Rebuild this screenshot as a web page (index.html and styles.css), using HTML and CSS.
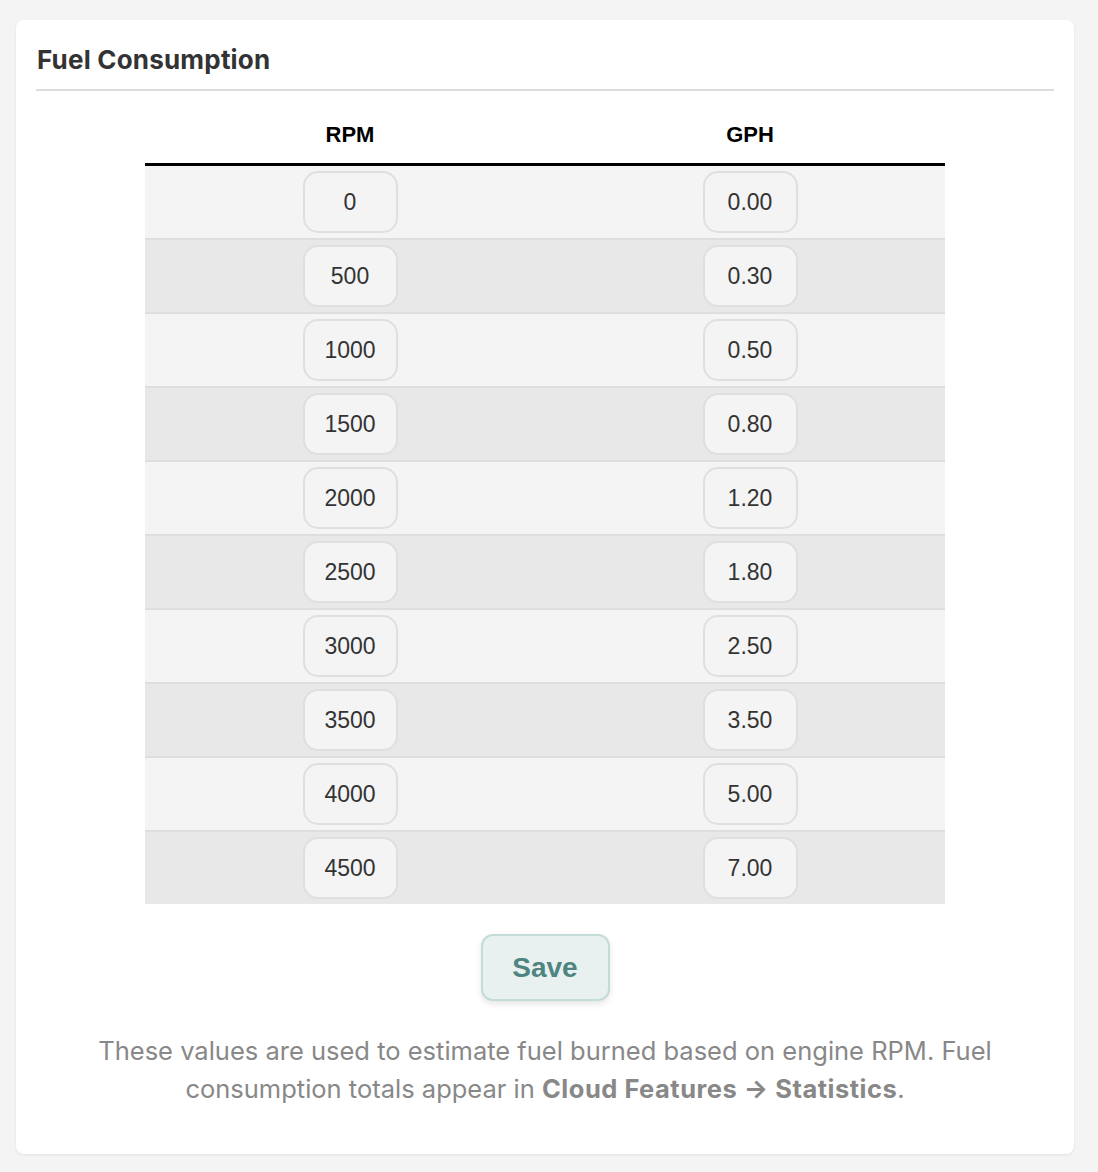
FILE: index.html
```html
<!DOCTYPE html>
<html lang="en">
  <head>
    <meta charset="UTF-8" />
    <meta name="viewport" content="width=device-width, initial-scale=1.0" />
    <title>Fuel Consumption</title>
    <link rel="stylesheet" href="styles.css">
  </head>
  <body>
    <div class="card">
      <h2 class="card-title">Fuel Consumption</h2>

      <table class="fuel-table">
        <thead>
          <tr>
            <th>RPM</th>
            <th>GPH</th>
          </tr>
        </thead>
        <tbody>
          <tr><td><input class="cell-input" value="0"></td><td><input class="cell-input" value="0.00"></td></tr>
          <tr><td><input class="cell-input" value="500"></td><td><input class="cell-input" value="0.30"></td></tr>
          <tr><td><input class="cell-input" value="1000"></td><td><input class="cell-input" value="0.50"></td></tr>
          <tr><td><input class="cell-input" value="1500"></td><td><input class="cell-input" value="0.80"></td></tr>
          <tr><td><input class="cell-input" value="2000"></td><td><input class="cell-input" value="1.20"></td></tr>
          <tr><td><input class="cell-input" value="2500"></td><td><input class="cell-input" value="1.80"></td></tr>
          <tr><td><input class="cell-input" value="3000"></td><td><input class="cell-input" value="2.50"></td></tr>
          <tr><td><input class="cell-input" value="3500"></td><td><input class="cell-input" value="3.50"></td></tr>
          <tr><td><input class="cell-input" value="4000"></td><td><input class="cell-input" value="5.00"></td></tr>
          <tr><td><input class="cell-input" value="4500"></td><td><input class="cell-input" value="7.00"></td></tr>
        </tbody>
      </table>

      <div class="actions">
        <button class="save-btn">Save</button>
      </div>

      <p class="note">
        These values are used to estimate fuel burned based on engine RPM. Fuel
        consumption totals appear in <b>Cloud Features &rarr; Statistics</b>.
      </p>
    </div>
  </body>
</html>
```

FILE: styles.css
```css
body {
  margin: 0;
  padding: 20px 24px 18px 16px;
  background: #f4f4f4;
  font-family: Inter, "Noto Sans", sans-serif;
}
.card {
  background: #fff;
  border-radius: 8px;
  box-shadow: 0 1px 3px rgba(0, 0, 0, 0.08);
  padding: 24px 20px 46px 20px;
}
.card-title {
  margin: 0;
  padding: 0 0 14px 1px;
  font-size: 26px;
  font-weight: 700;
  letter-spacing: 0.2px;
  color: #333;
  border-bottom: 2px solid #ddd;
}
.fuel-table {
  width: 800px;
  margin: 19px auto 0;
  border-collapse: collapse;
  font-family: "Liberation Sans", Arial, sans-serif;
}
.fuel-table th {
  padding: 12px 0 15px 10px;
  font-size: 22px;
  font-weight: 700;
  color: #000;
  border-bottom: 3px solid #000;
  width: 50%;
}
.fuel-table td {
  height: 72px;
  padding: 0 0 0 10px;
  text-align: center;
  border-top: 2px solid #dedede;
}
.fuel-table tbody tr:first-child td {
  border-top: none;
}
.fuel-table tbody tr:nth-child(odd) {
  background: #f4f4f4;
}
.fuel-table tbody tr:nth-child(even) {
  background: #e8e8e8;
}
.cell-input {
  width: 95px;
  height: 62px;
  box-sizing: border-box;
  border: 2px solid #dfdfdf;
  border-radius: 15px;
  background: #f4f4f4;
  font-family: "Liberation Sans", Arial, sans-serif;
  font-size: 23px;
  color: #333;
  text-align: center;
  vertical-align: middle;
}
.actions {
  display: flex;
  justify-content: center;
  padding: 30px 0 0;
}
.save-btn {
  width: 129px;
  height: 67px;
  border: 2px solid #c3dcd8;
  border-radius: 12px;
  background: #e8f1f0;
  color: #4f8580;
  font-family: "Liberation Sans", Arial, sans-serif;
  font-size: 28px;
  font-weight: 700;
  box-shadow: 0 3px 6px rgba(0, 0, 0, 0.1);
}
.note {
  margin: 31px auto 0;
  max-width: 960px;
  text-align: center;
  font-size: 25.5px;
  line-height: 38px;
  color: #888;
}
.note b {
  font-weight: 700;
  letter-spacing: 0.5px;
}
```
